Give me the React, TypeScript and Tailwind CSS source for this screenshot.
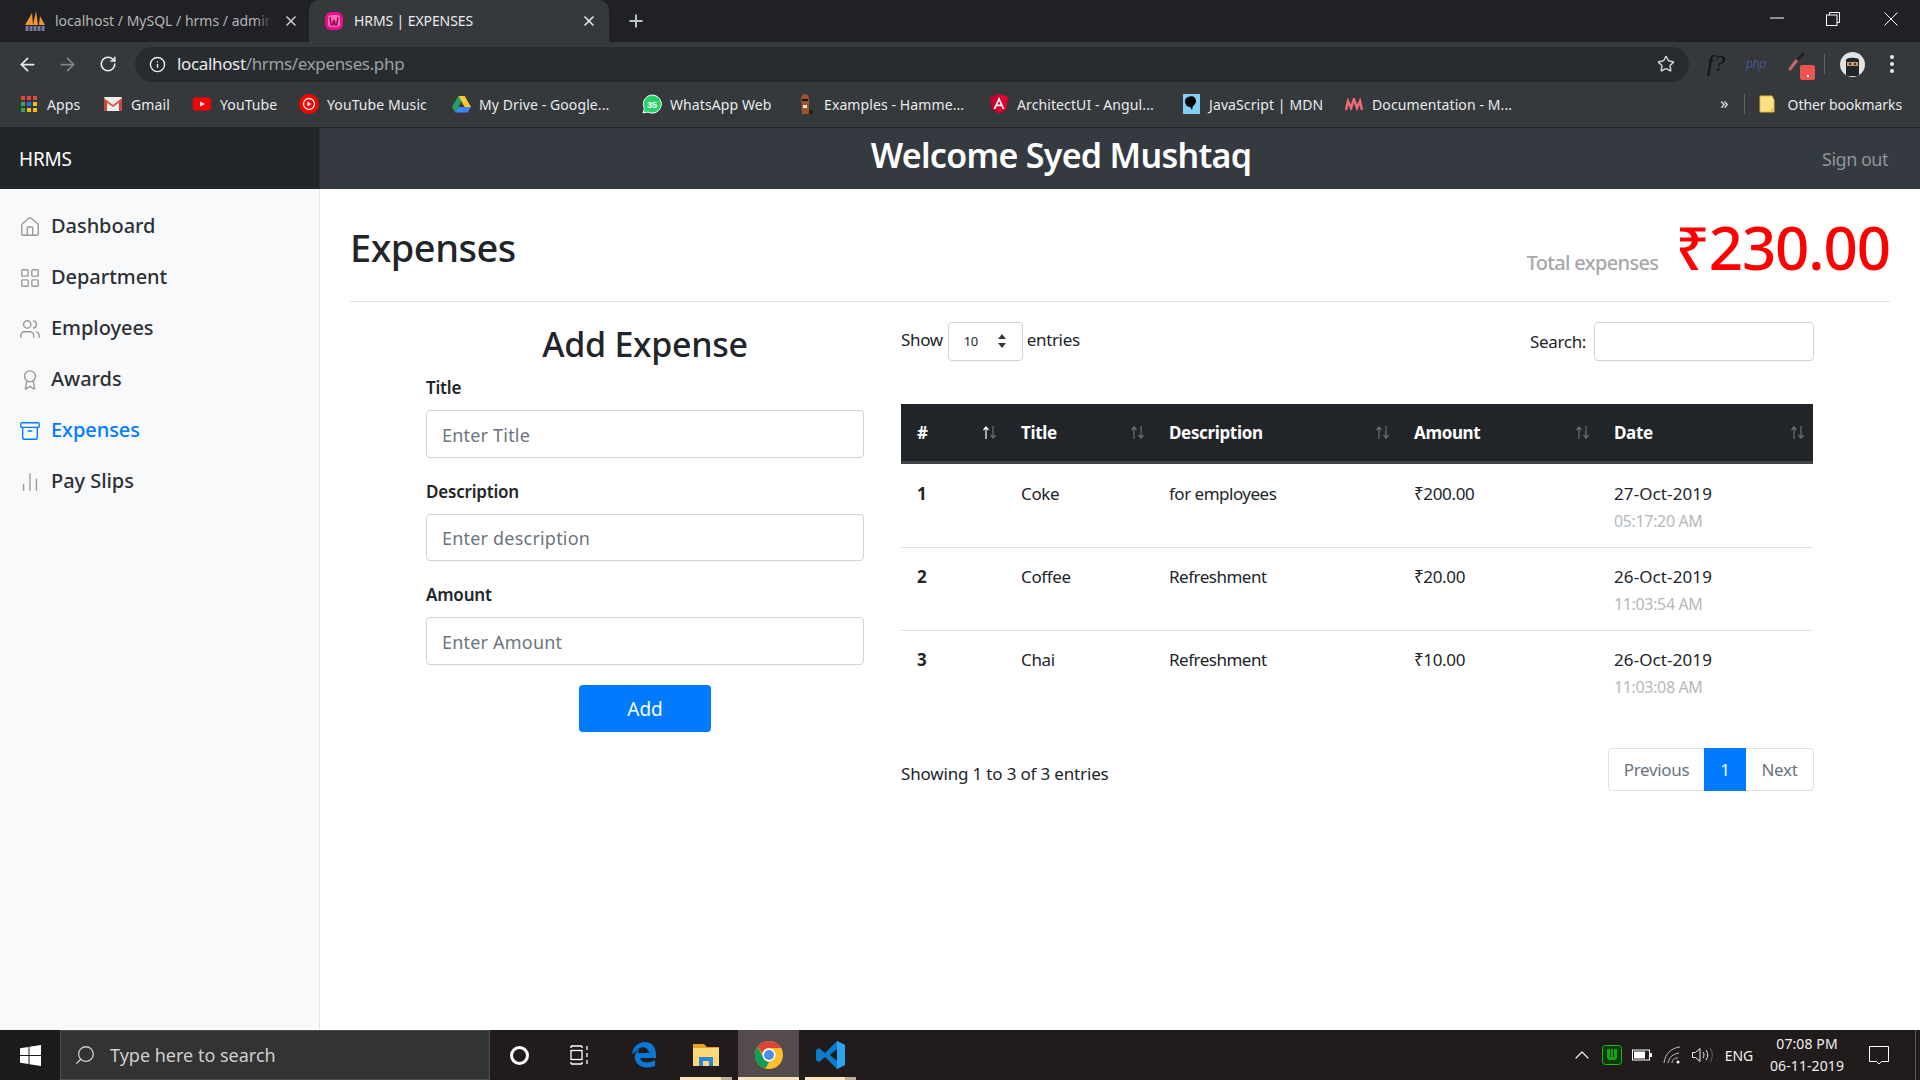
import { House, LayoutGrid, Users, Award, Archive, ChartNoAxesColumn, ArrowLeft, ArrowRight, RotateCw, Info, Star, X, Plus, ChevronUp, Search } from "lucide-react";
import type { ReactNode } from "react";

const Wamp = () => (
  <svg width="20" height="20" viewBox="0 0 20 20"><rect x="1" y="1" width="18" height="18" rx="6" fill="#ec0c8e" /><rect x="4" y="4" width="12" height="12" rx="3" fill="#f472b6" /><path d="M6 6l1.2 8h1.6L10 9l1.2 5h1.6L14 6" fill="none" stroke="#a10560" strokeWidth="1.6" /></svg>
);
const Pma = () => (
  <svg width="22" height="22" viewBox="0 0 22 22"><path d="M1 15L8 3l1 12zM9 15l3-14 2 14zM15 15l1-9 5 9z" fill="#f0962a" /><path d="M1 16h20v5H1z" fill="#4b4b6b" /><path d="M3 16v5M7 16v5M11 16v5M15 16v5M19 16v5" stroke="#aab" strokeWidth="1" /></svg>
);
const AppsIcon = () => (
  <span className="grid grid-cols-3 gap-[2px] w-[16px]">
    {["#ea4335", "#ea4335", "#ea4335", "#34a853", "#1a73e8", "#fbbc04", "#34a853", "#fbbc04", "#fbbc04"].map((x, i) => <i key={i} className="block w-[4px] h-[4px]" style={{ background: x }} />)}
  </span>
);
const GmailIcon = () => (
  <svg width="18" height="14" viewBox="0 0 18 14"><rect width="18" height="14" rx="1" fill="#eee" /><path d="M0 1l9 7 9-7v3l-9 6-9-6z" fill="#d8d8d8" /><path d="M0 1.5V14h3V4zM18 1.5V14h-3V4z" fill="#c9453a" /><path d="M0 1l9 7 9-7v2.4L9 10 0 3.4z" fill="#d9534a" /></svg>
);
const YtIcon = () => (
  <svg width="18" height="14" viewBox="0 0 18 14"><rect width="18" height="13" y="0.5" rx="3" fill="#f00" /><path d="M7 4.5l5 2.5-5 2.5z" fill="#fff" /></svg>
);
const YtmIcon = () => (
  <svg width="20" height="20" viewBox="0 0 20 20"><circle cx="10" cy="10" r="10" fill="#f00" /><circle cx="10" cy="10" r="5.5" fill="none" stroke="#fff" strokeWidth="1.3" /><path d="M8.3 7.5l4.2 2.5-4.2 2.5z" fill="#fff" /></svg>
);
const DriveIcon = () => (
  <svg width="19" height="17" viewBox="0 0 19 17"><path d="M6.3 0h6.4l6.3 11h-6.4z" fill="#fcc934" /><path d="M6.3 0L0 11l3.2 5.5L9.5 5.5z" fill="#1fa463" /><path d="M3.2 16.5h12.6L19 11H6.4z" fill="#4285f4" /></svg>
);
const WaIcon = () => (
  <svg width="20" height="20" viewBox="0 0 20 20"><path d="M1 19l1.4-4.6A9 9 0 1 1 6 18z" fill="#25d366" stroke="#fff" strokeWidth="1" /><text x="10" y="13.5" textAnchor="middle" fontSize="9" fontWeight="700" fill="#fff" fontFamily="Liberation Sans">35</text></svg>
);
const ManIcon = () => (
  <svg width="16" height="20" viewBox="0 0 16 20"><path d="M3 5c0-3 2-5 4-5s4 2 4 5v15H4z" fill="#a0522d" /><rect x="4" y="5" width="6" height="2" fill="#111" /><path d="M5 11h4v3H5z" fill="#eee" /><rect x="11" y="16" width="4" height="4" fill="#222" /></svg>
);
const AngularIcon = () => (
  <svg width="18" height="20" viewBox="0 0 18 20"><path d="M9 0l9 3-1.5 12L9 20 1.500 15 0 3z" fill="#c3002f" /><path d="M9 0l9 3-1.500 12L9 20z" fill="#dd0031" /><path d="M9 3L3.500 15h2l1.100-2.800h4.800L12.500 15h2zm0 4l1.700 3.600H7.300z" fill="#fff" /></svg>
);
const MdnIcon = () => (
  <svg width="17" height="20" viewBox="0 0 17 20"><rect width="17" height="20" fill="#83d0f2" /><path d="M5 3c4-2 8 0 8 4 0 3-2 4-3 5l-1 4-2-3c-3 0-5-3-5-6 0-2 1-3 3-4z" fill="#000" /></svg>
);
const DocIcon = () => (
  <svg width="18" height="13" viewBox="0 0 18 13"><path d="M1 12l2-9 3 7 3-9 3 9 3-7 2 9" fill="none" stroke="#ef6a78" strokeWidth="2.400" /></svg>
);

const bookmarks: { w: string; icon: ReactNode; label: string }[] = [
  { w: "w-[84px]", icon: <AppsIcon />, label: "Apps" },
  { w: "w-[89px]", icon: <GmailIcon />, label: "Gmail" },
  { w: "w-[107px]", icon: <YtIcon />, label: "YouTube" },
  { w: "w-[152px]", icon: <YtmIcon />, label: "YouTube Music" },
  { w: "w-[191px]", icon: <DriveIcon />, label: "My Drive - Google..." },
  { w: "w-[154px]", icon: <WaIcon />, label: "WhatsApp Web" },
  { w: "w-[193px]", icon: <ManIcon />, label: "Examples - Hamme..." },
  { w: "w-[192px]", icon: <AngularIcon />, label: "ArchitectUI - Angul..." },
  { w: "w-[163px]", icon: <MdnIcon />, label: "JavaScript | MDN" },
  { w: "w-[180px]", icon: <DocIcon />, label: "Documentation - M..." },
];

const nav = [
  { icon: House, label: "Dashboard" },
  { icon: LayoutGrid, label: "Department" },
  { icon: Users, label: "Employees" },
  { icon: Award, label: "Awards" },
  { icon: Archive, label: "Expenses", active: true },
  { icon: ChartNoAxesColumn, label: "Pay Slips" },
];

const rows = [
  { n: "1", t: "Coke", d: "for employees", a: "₹200.00", date: "27-Oct-2019", time: "05:17:20 AM", cls: "h-[85px] border-b border-t border-[#dee2e6]", pad: "pt-[17px]" },
  { n: "2", t: "Coffee", d: "Refreshment", a: "₹20.00", date: "26-Oct-2019", time: "11:03:54 AM", cls: "h-[83px] border-b border-[#dee2e6]", pad: "pt-[16px]" },
  { n: "3", t: "Chai", d: "Refreshment", a: "₹10.00", date: "26-Oct-2019", time: "11:03:08 AM", cls: "h-[83px]", pad: "pt-[16px]" },
];

const heads = [
  { l: "#", w: "w-[104px]", active: true },
  { l: "Title", w: "w-[148px]" },
  { l: "Description", w: "w-[245px]" },
  { l: "Amount", w: "w-[200px]" },
  { l: "Date", w: "w-[215px]" },
];

function TabBar() {
  return (
    <div className="h-[42px] bg-[#202124] flex items-end text-[14px]">
      <div className="w-[309px] h-[42px] flex items-center pl-[24px] pr-[10px] pb-[1px] text-[#b4b6b8]">
        <Pma />
        <span className="relative ml-[9px] w-[217px] overflow-hidden whitespace-nowrap">
          localhost / MySQL / hrms / admin
          <i className="absolute right-0 top-0 h-full w-[16px] bg-gradient-to-r from-transparent to-[#202124]" />
        </span>
        <X size={16} className="ml-auto text-[#c9cbcd]" strokeWidth={2.4} />
      </div>
      <div className="w-[300px] h-[42px] bg-[#35393c] rounded-t-[10px] flex items-center pl-[15px] pr-[12px] pb-[1px] text-[#e8eaed]">
        <Wamp />
        <span className="ml-[10px] whitespace-nowrap tracking-[-0.1px]">HRMS | EXPENSES</span>
        <X size={16} className="ml-auto text-[#e8eaed]" strokeWidth={2.4} />
      </div>
      <div className="h-[42px] flex items-center ml-[17px]">
        <Plus size={20} className="text-[#bdc1c6]" strokeWidth={2.4} />
      </div>
      <div className="ml-auto h-[42px] flex items-start text-white">
        <svg width="14" height="2" viewBox="0 0 14 2" className="mt-[17px] mr-[42px]"><path d="M0 1h14" stroke="#fff" strokeWidth="1" /></svg>
        <svg width="14" height="14" viewBox="0 0 14 14" className="mt-[12px] mr-[44px]" fill="none" stroke="#fff" strokeWidth="1"><path d="M3.500 3V.5h10v10H11" /><rect x=".5" y="3" width="10.500" height="10.500" /></svg>
        <svg width="14" height="14" viewBox="0 0 14 14" className="mt-[12px] mr-[22px]" fill="none" stroke="#fff" strokeWidth="1"><path d="M.5.5l13 13M13.500.5l-13 13" /></svg>
      </div>
    </div>
  );
}

function Toolbar() {
  return (
    <div className="h-[41px] pt-[3px] bg-[#35393c] flex items-center text-[#e8eaed]">
      <ArrowLeft size={21} className="ml-[17px]" strokeWidth={2} />
      <ArrowRight size={21} className="ml-[19px] text-[#80858a]" strokeWidth={2} />
      <RotateCw size={18} className="ml-[21px]" strokeWidth={2.2} />
      <div className="ml-[18px] w-[1554px] h-[35px] bg-[#292c2e] rounded-full flex items-center pl-[14px] text-[17px] tracking-[-0.35px]">
        <Info size={17} strokeWidth={2} />
        <span className="ml-[11px] text-[#e8eaed]">localhost</span>
        <span className="text-[#9aa0a6]">/hrms/expenses.php</span>
        <Star size={18} className="ml-auto mr-[14px] text-[#d0d2d4]" strokeWidth={2} />
      </div>
      <span className="ml-[18px] w-[20px] text-[23px] italic font-['Liberation_Serif',serif] text-[#111] whitespace-nowrap">f?</span>
      <span className="ml-[19px] w-[24px] text-[12px] italic font-['Liberation_Sans',sans-serif] text-[#47548f]">php</span>
      <div className="relative ml-[18px] w-[28px] h-[28px]">
        <svg width="20" height="20" viewBox="0 0 20 20" className="absolute left-0 top-[1px]"><path d="M2 18L9 9" stroke="#c9666b" strokeWidth="3" strokeLinecap="round" /><path d="M9 9l7-7" stroke="#222" strokeWidth="3" /></svg>
        <span className="absolute right-[1px] bottom-[-2px] w-[15px] h-[15px] rounded-[2px] bg-[#ef5350] flex items-end justify-center pb-[3px]"><i className="block w-[2px] h-[2px] bg-white" /></span>
      </div>
      <i className="block ml-[8px] w-px h-[20px] bg-[#5f6368]" />
      <div className="ml-[15px] w-[25px] h-[25px] rounded-full bg-[#e3e3e3] overflow-hidden flex items-center justify-center">
        <svg width="25" height="25" viewBox="0 0 25 25"><path d="M6 8c0-3 13-3 13 0v16H6z" fill="#22262a" /><rect x="7" y="10" width="11" height="4" fill="#c99a6b" /><circle cx="10" cy="12" r="1" fill="#111" /><circle cx="15" cy="12" r="1" fill="#111" /></svg>
      </div>
      <div className="ml-[25px] flex flex-col gap-[3px]">
        <i className="block w-[4px] h-[4px] rounded-full bg-[#e8eaed]" />
        <i className="block w-[4px] h-[4px] rounded-full bg-[#e8eaed]" />
        <i className="block w-[4px] h-[4px] rounded-full bg-[#e8eaed]" />
      </div>
    </div>
  );
}

function Bookmarks() {
  return (
    <div className="h-[45px] pb-[2px] bg-[#35393c] border-b border-[#222427] flex items-center pl-[19px] text-[14px] tracking-[0.1px] text-[#e8eaed]">
      {bookmarks.map((b) => (
        <div key={b.label} className={`${b.w} flex items-center shrink-0 whitespace-nowrap`}>
          <span className="w-[20px] flex justify-center shrink-0">{b.icon}</span>
          <span className="ml-[8px]">{b.label}</span>
        </div>
      ))}
      <span className="ml-auto text-[16px] leading-none mb-[3px]">»</span>
      <i className="block ml-[15px] w-px h-[20px] bg-[#5f6368]" />
      <svg width="16" height="18" viewBox="0 0 16 18" className="ml-[14px]"><path d="M1 1h12l2 4v12H1z" fill="#fde182" stroke="#e0b93f" /><path d="M12 13h3v4h-3z" fill="#f2c94c" /></svg>
      <span className="ml-[13px] mr-[18px] tracking-[-0.1px]">Other bookmarks</span>
    </div>
  );
}

function TopNav() {
  return (
    <div className="h-[61px] bg-[#343a40] flex items-center">
      <div className="w-[320px] h-full bg-[#22252a] flex items-center pl-[19px] pt-[1px] text-white text-[19px] tracking-[-0.2px] border-r border-[#2c3035]">HRMS</div>
      <div className="flex-1 flex justify-center text-white text-[34px] font-semibold tracking-[-0.7px] leading-none pb-[8px] pr-[20px]">Welcome Syed Mushtaq</div>
      <span className="mr-[32px] pt-[1px] text-[18px] text-[#8e9499] tracking-[-0.5px]">Sign out</span>
    </div>
  );
}

function Sidebar() {
  return (
    <aside className="w-[320px] shrink-0 bg-[#f8f9fa] border-r border-[#e3e5e8] pt-[11px]">
      {nav.map(({ icon: Icon, label, active }) => (
        <div key={label} className={`h-[51px] flex items-center pl-[19px] text-[20px] font-medium tracking-[-0.05px] ${active ? "text-[#007bff]" : "text-[#2d3036]"}`}>
          <Icon size={22} strokeWidth={1.5} className={`mt-[3px] ${active ? "text-[#007bff]" : "text-[#999]"}`} />
          <span className="ml-[10px]">{label}</span>
        </div>
      ))}
    </aside>
  );
}

function Field({ label, ph, labelCls, inputCls }: { label: string; ph: string; labelCls: string; inputCls: string }) {
  return (
    <>
      <label className={`block h-[22px] leading-[22px] text-[17px] font-semibold text-[#212529] tracking-[-0.2px] ${labelCls}`}>{label}</label>
      <input placeholder={ph} className={`block w-full border border-[#ced4da] rounded-[4px] px-[15px] pt-[1px] text-[18px] tracking-[0.2px] bg-white outline-none placeholder:text-[#6c757d] ${inputCls}`} />
    </>
  );
}

function ExpenseForm() {
  return (
    <div className="ml-[76px] w-[438px] shrink-0">
      <h3 className="mt-[10px] h-[64px] flex items-center justify-center text-[34px] font-medium text-[#212529] tracking-[-0.3px]">Add Expense</h3>
      <Field label="Title" ph="Enter Title" labelCls="mt-[1px]" inputCls="mt-[11px] h-[48px]" />
      <Field label="Description" ph="Enter description" labelCls="mt-[23px]" inputCls="mt-[11px] h-[47px]" />
      <Field label="Amount" ph="Enter Amount" labelCls="mt-[23px]" inputCls="mt-[11px] h-[48px]" />
      <div className="mt-[20px] flex justify-center">
        <button className="w-[132px] h-[47px] pt-[2px] bg-[#007bff] rounded-[4px] text-white text-[19px]">Add</button>
      </div>
    </div>
  );
}

function SortArrows({ active }: { active?: boolean }) {
  return (
    <svg width="15" height="13" viewBox="0 0 15 13" fill="none" strokeWidth="1.2" className="shrink-0">
      <path d="M4 13V1M1.500 4L4 1l2.500 3" stroke={active ? "#fff" : "#6b6f73"} />
      <path d="M11 0v12M8.500 9l2.500 3 2.500-3" stroke="#6b6f73" />
    </svg>
  );
}

function DataTable() {
  return (
    <div className="ml-[37px] w-[913px] shrink-0 text-[17px] tracking-[-0.35px] text-[#212529]">
      <div className="mt-[20px] h-[39px] flex items-center">
        <span className="mb-[3px]">Show</span>
        <div className="relative ml-[5px] w-[75px] h-[39px] border border-[#ced4da] rounded-[4px] flex items-center pl-[15px] text-[13px]">
          10
          <svg width="10" height="14" viewBox="0 0 10 14" className="absolute right-[15px] top-[11px]"><path d="M5 0l4 5H1zM5 14l4-5H1z" fill="#343a40" /></svg>
        </div>
        <span className="ml-[4px] mb-[3px]">entries</span>
        <span className="ml-auto">Search:</span>
        <input className="ml-[8px] w-[220px] h-[39px] border border-[#ced4da] rounded-[4px] bg-white outline-none" />
      </div>
      <table className="mt-[43px] w-[912px] table-fixed border-collapse">
        <thead>
          <tr className="bg-[#212529] text-white h-[58px] border-b-[3px] border-[#3f444b]">
            {heads.map((h) => (
              <th key={h.l} className={`${h.w} pl-[16px] pr-[8px] pt-[1px] font-bold text-left text-[17px]`}>
                <div className="flex items-center justify-between">
                  <span>{h.l}</span>
                  <SortArrows active={h.active} />
                </div>
              </th>
            ))}
          </tr>
        </thead>
        <tbody>
          {rows.map((r) => (
            <tr key={r.n} className={`align-top ${r.cls}`}>
              <td className={`pl-[16px] ${r.pad} font-bold`}>{r.n}</td>
              <td className={`pl-[16px] ${r.pad}`}>{r.t}</td>
              <td className={`pl-[16px] ${r.pad} tracking-[-0.5px]`}>{r.d}</td>
              <td className={`pl-[16px] ${r.pad}`}>{r.a}</td>
              <td className={`pl-[16px] ${r.pad}`}>
                <div className="tracking-[0.1px]">{r.date}</div>
                <div className="mt-[5px] text-[16px] leading-[20px] text-[#b5b8bb]">{r.time}</div>
              </td>
            </tr>
          ))}
        </tbody>
      </table>
      <div className="mt-[35px] flex items-start">
        <span className="mt-[13px] tracking-[-0.17px]">Showing 1 to 3 of 3 entries</span>
        <div className="ml-auto flex h-[43px] border border-[#dee2e6] rounded-[4px] text-[#6c757d]">
          <span className="w-[95px] flex items-center justify-center">Previous</span>
          <span className="w-[42px] -my-px flex items-center justify-center bg-[#007bff] text-white">1</span>
          <span className="w-[67px] flex items-center justify-center">Next</span>
        </div>
      </div>
    </div>
  );
}

function Main() {
  return (
    <main className="flex-1 px-[30px] min-w-0">
      <div className="h-[113px] border-b border-[#dee2e6] flex items-start">
        <h1 className="mt-[30px] text-[38px] leading-[56px] font-medium text-[#212529] tracking-[-0.5px]">Expenses</h1>
        <span className="ml-auto mt-[59px] text-[20px] font-medium text-[#a5a8ab] tracking-[-0.65px]">Total expenses</span>
        <span className="ml-[17px] mt-[18px] text-[60px] leading-[80px] text-[#f00] font-medium tracking-[-1.1px]">₹230.00</span>
      </div>
      <div className="flex">
        <ExpenseForm />
        <DataTable />
      </div>
    </main>
  );
}

const Under = () => (
  <span className="absolute left-0 right-0 bottom-0 h-[3px] flex">
    <i className="block flex-1 bg-[#fbe4c0]" />
    <i className="block w-[11px] bg-[#bcae99]" />
  </span>
);

function Taskbar() {
  return (
    <footer className="h-[50px] bg-[#211b1c] flex items-stretch text-white">
      <div className="w-[60px] bg-[#1b1b1a] flex items-center justify-center">
        <svg width="21" height="21" viewBox="0 0 21 21" fill="#fff"><path d="M0 3.200l8.500-1.200v8H0zM9.500 1.800L21 0v10H9.500zM0 11h8.500v8L0 17.800zM9.500 11H21v10L9.500 19.200z" /></svg>
      </div>
      <div className="w-[430px] bg-[#333] border border-[#505050] flex items-center pl-[13px] text-[18px] text-[#cfcfcf]">
        <Search size={22} strokeWidth={1.4} className="-scale-x-100" />
        <span className="ml-[14px]">Type here to search</span>
      </div>
      <div className="w-[58px] flex items-center justify-center"><i className="block w-[19px] h-[19px] rounded-full border-[3px] border-white" /></div>
      <div className="w-[64px] flex items-center justify-center">
        <svg width="20" height="20" viewBox="0 0 20 20" fill="none" stroke="#fff" strokeWidth="1.300"><rect x="1" y="5.500" width="11" height="9" /><path d="M1 1h11M1 1v2M12 1v2M1 19h11M1 19v-2M12 19v-2M17 1v4M17 8v4M17 15v4" /></svg>
      </div>
      <div className="w-[64px] flex items-center justify-center">
        <svg width="26" height="28" viewBox="0 0 26 28"><path d="M1 13C2 5 8 1 14 1c7 0 11 5 11 13v3H9c1 5 9 6 15 2v6c-7 3-18 2-20-7-1-5 2-9 6-11-2 1-3 3-3 5h11c0-6-8-8-12-3-2 2-4 4-5 4z" fill="#0a78d7" /></svg>
      </div>
      <div className="relative ml-[4px] w-[52px] flex items-center justify-center">
        <svg width="28" height="26" viewBox="0 0 28 26"><path d="M1 2h11l3 3h12v19H1z" fill="#e0a526" /><path d="M1 6h26v18H1z" fill="#fcd876" /><path d="M7 24v-9h14v9h-4v-5h-6v5z" fill="#2b86d6" /></svg>
        <Under />
      </div>
      <div className="relative ml-[6px] w-[61px] bg-[#544c4c] flex items-center justify-center">
        <svg width="28" height="28" viewBox="0 0 28 28"><circle cx="14" cy="14" r="14" fill="#fbc02d" /><path d="M14 0a14 14 0 0 1 12.100 7H14a7 7 0 0 0-6.800 5.300L2.500 6A14 14 0 0 1 14 0z" fill="#db4437" /><path d="M2.500 6l5.600 9.700A7 7 0 0 0 14 21l-3.500 6.600A14 14 0 0 1 2.500 6z" fill="#0f9d58" /><circle cx="14" cy="14" r="6.500" fill="#fff" /><circle cx="14" cy="14" r="5" fill="#4d8df0" /></svg>
        <span className="absolute left-0 right-0 bottom-0 h-[3px] bg-[#fbe4c0]" />
      </div>
      <div className="relative ml-[6px] w-[51px] flex items-center justify-center">
        <svg width="30" height="30" viewBox="0 0 30 30"><path d="M21 1l8 4v20l-8 4L9 17l-6 5-3-2v-10l3-2 6 5z" fill="#0a7cc9" /><path d="M21 1l8 4v20l-8 4z" fill="#2aa5ec" /><path d="M21 9l-7 6 7 6z" fill="#211b1c" /></svg>
        <Under />
      </div>
      <div className="ml-auto flex items-center text-[#f0f0f0]">
        <span className="w-[30px] flex justify-center"><ChevronUp size={24} strokeWidth={1.2} /></span>
        <span className="w-[30px] flex justify-center">
          <svg width="20" height="20" viewBox="0 0 20 20"><rect x=".5" y=".5" width="19" height="19" rx="3" fill="#0b3a0b" stroke="#1dbb1d" /><path d="M5 4v9l2 2h6l2-2V4h-3v8h-1V4H9v8H8V4z" fill="#16a316" /></svg>
        </span>
        <span className="w-[30px] flex justify-center">
          <svg width="20" height="12" viewBox="0 0 20 12"><rect x=".5" y="1" width="17" height="10" fill="none" stroke="#fff" /><rect x="2" y="2.500" width="11" height="7" fill="#fff" /><rect x="18" y="4" width="2" height="4" fill="#fff" /></svg>
        </span>
        <span className="w-[30px] flex justify-center">
          <svg width="18" height="18" viewBox="0 0 18 18" fill="none" stroke="#bbb" strokeWidth="1"><path d="M1 17C2 8 8 2 17 1M5 17c1-6 5-9 11-10M9 17c0-3 2-5 6-5" /><circle cx="15" cy="16" r="1.500" fill="#fff" stroke="none" /></svg>
        </span>
        <span className="w-[30px] flex justify-center">
          <svg width="21" height="16" viewBox="0 0 21 16" fill="none" strokeWidth="1"><path d="M.5 5.500h3L8 1.500v13l-4.500-4h-3z" stroke="#f0f0f0" /><path d="M11 5c1.300 1.800 1.300 4.200 0 6" stroke="#f0f0f0" /><path d="M14 3c2.200 3 2.200 7 0 10" stroke="#f0f0f0" /><path d="M18 1c3 4 3 10 0 14" stroke="#666" /></svg>
        </span>
        <span className="w-[44px] text-center text-[14px] tracking-[-0.1px]">ENG</span>
        <div className="w-[92px] text-center text-[14px] leading-[22px] tracking-[0.1px]">
          <div>07:08 PM</div>
          <div>06-11-2019</div>
        </div>
        <span className="w-[52px] flex justify-center">
          <svg width="20" height="19" viewBox="0 0 20 19" fill="none" stroke="#fff" strokeWidth="1"><path d="M.5.500h19v15h-7l-2.500 2.500L7.500 15.500h-7z" /></svg>
        </span>
        <span className="w-[15px] h-full flex justify-center"><i className="block w-px h-full bg-[#5a5a5a] ml-[6px]" /></span>
      </div>
    </footer>
  );
}

export default function App() {
  return (
    <div className="h-screen w-[1920px] flex flex-col overflow-hidden bg-white font-['Noto_Sans',sans-serif]">
      <TabBar />
      <Toolbar />
      <Bookmarks />
      <TopNav />
      <div className="flex-1 flex min-h-0">
        <Sidebar />
        <Main />
      </div>
      <Taskbar />
    </div>
  );
}
